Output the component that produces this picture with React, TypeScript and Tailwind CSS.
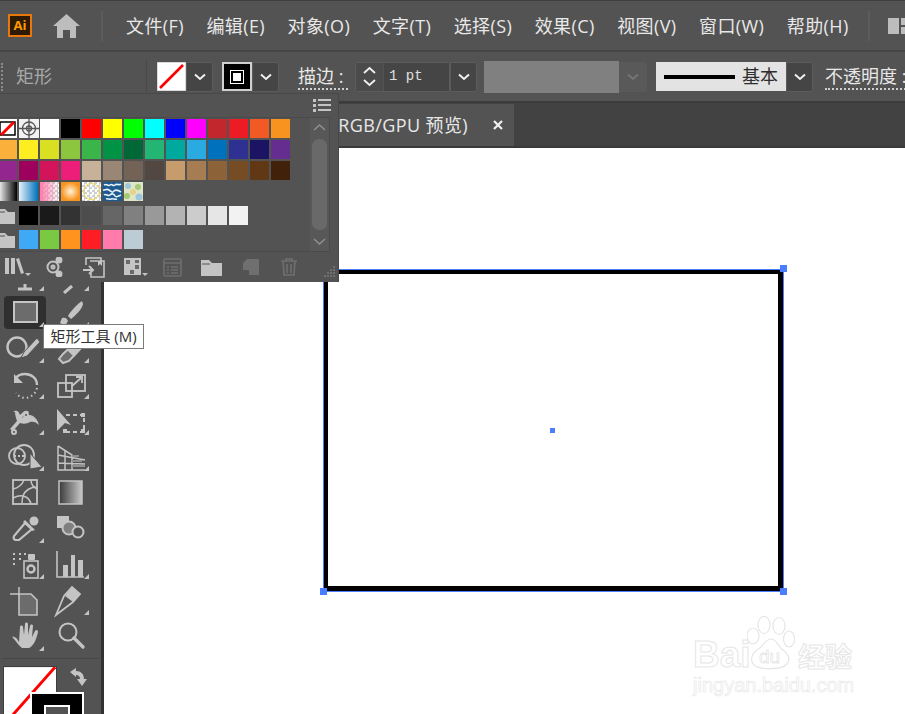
import { ReactNode } from "react";

const FONT = "font-['Open_Sans','Noto_Sans_CJK_SC',sans-serif]";
const LINE = "#c4c4c4";

const MENUS = ["文件(F)", "编辑(E)", "对象(O)", "文字(T)", "选择(S)", "效果(C)", "视图(V)", "窗口(W)", "帮助(H)"];

const ROW1 = ["#ff0000", "#ffff00", "#00ff00", "#00ffff", "#0000ff", "#ff00ff", "#c1272d", "#ed1c24", "#f15a24", "#f7931e"];
const ROW2 = ["#fbb03b", "#fcee21", "#d9e021", "#8cc63f", "#39b54a", "#009245", "#006837", "#22b573", "#00a99d", "#29abe2", "#0071bc", "#2e3192", "#1b1464", "#662d91"];
const ROW3 = ["#93278f", "#9e005d", "#d4145a", "#ed1e79", "#c7b299", "#998675", "#736357", "#534741", "#c69c6d", "#a67c52", "#8c6239", "#754c24", "#603813", "#42210b"];
const GRAYS = ["#000000", "#1a1a1a", "#333333", "#4d4d4d", "#666666", "#808080", "#999999", "#b3b3b3", "#cccccc", "#e6e6e6", "#f2f2f2"];
const BRIGHTS = ["#3fa9f5", "#7ac943", "#ff931e", "#ff1d25", "#ff7bac", "#bdccd4"];

const Chevron = ({ dim }: { dim?: boolean }) => (
  <svg width="14" height="8" viewBox="0 0 14 8" fill="none" stroke={dim ? "#757575" : "#f0f0f0"} strokeWidth="2">
    <path d="M2 1.5 7 6l5-4.5" />
  </svg>
);

const DropButton = ({ w = "w-[27px]", dim }: { w?: string; dim?: boolean }) => (
  <div className={`${w} h-[30px] rounded-r-[3px] flex items-center justify-center ${dim ? "bg-[#595959]" : "bg-[#454545] border border-[#5c5c5c]"}`}>
    <Chevron dim={dim} />
  </div>
);

const Swatch = ({ color }: { color: string }) => (
  <div className="w-[19px] h-[19px]" style={{ backgroundColor: color }} />
);

const Folder = () => (
  <svg width="19" height="19" viewBox="0 0 19 19" fill="#c4c4c4">
    <path d="M-2 3h9l3 3h7v12H-2z" />
    <path d="M-2 6h9" stroke="#535353" fill="none" />
  </svg>
);

const NoneSwatch = () => (
  <svg width="19" height="19" viewBox="0 0 19 19">
    <rect width="19" height="19" fill="#fff" />
    <rect x="2" y="3" width="15" height="13" fill="#fff" stroke="#000" strokeWidth="1.5" />
    <path d="M3 16 16 3" stroke="#f00" strokeWidth="3" />
  </svg>
);

const RegSwatch = () => (
  <svg width="20" height="19" viewBox="0 0 20 19" fill="none" stroke="#555">
    <rect width="20" height="19" fill="#f2f2f2" stroke="none" />
    <circle cx="10" cy="9.5" r="6.5" strokeWidth="1.3" />
    <circle cx="10" cy="9.5" r="2.5" strokeWidth="1.3" />
    <path d="M10 0v19M0 9.5h20" strokeWidth="1.3" />
  </svg>
);

const CircleChecker = () => (
  <div className="w-[19px] h-[19px] bg-white bg-[repeating-conic-gradient(#cfcfcf_0%_25%,#ffffff_0%_50%)] bg-[length:5px_5px] flex items-center justify-center">
    <div className="w-[17px] h-[17px] rounded-full border border-[#f0d64a]" />
  </div>
);

const BluePattern = () => (
  <svg width="19" height="19" viewBox="0 0 19 19" fill="none" stroke="#e8f0f6" strokeWidth="1.6">
    <rect width="19" height="19" fill="#1c5a92" stroke="none" />
    <path d="M1 3c3-2 4 2 6 0s3 2 5 0 4 1 6-1M0 8c2 1 3-2 6 0s3 3 5 1 4-1 7 1M1 13c2-2 4 2 6 0s4-1 5 1 3 0 6-1M3 17c2-1 3 1 5 0s4 1 6 0" />
  </svg>
);

const GreenPattern = () => (
  <svg width="19" height="19" viewBox="0 0 19 19">
    <rect width="19" height="19" fill="#dfe6c8" />
    <circle cx="4" cy="4" r="3" fill="#9cc7dc" />
    <circle cx="14" cy="5" r="3" fill="#a4c974" />
    <circle cx="9" cy="10" r="3" fill="#e8d28a" />
    <circle cx="3" cy="14" r="3" fill="#a4c974" />
    <circle cx="15" cy="15" r="3.5" fill="#9cc7dc" />
  </svg>
);

// one 45x36 toolbar cell, drawn in local coordinates
const Tool = ({ children, corner = true, active }: { children?: ReactNode; corner?: boolean; active?: boolean }) => (
  <div className="relative w-[45px] h-[36px]">
    {active && <div className="absolute left-[1px] top-[2px] w-[42px] h-[33px] rounded-[4px] bg-[#2f2f2f]" />}
    <svg className="absolute inset-0" width="45" height="36" viewBox="0 0 45 36" fill="none" stroke={LINE} strokeWidth="2">
      {children}
    </svg>
    {corner && (
      <svg className="absolute right-[4px] bottom-[3px]" width="5" height="5" viewBox="0 0 5 5" fill={LINE}>
        <path d="M5 0v5H0z" />
      </svg>
    )}
  </div>
);

const Panel = () => (
  <div className="absolute left-0 top-[93px] w-[339px] h-[189px] bg-[#535353] border-t border-r border-[#484848] flex flex-col">
    <div className="h-[23px] shrink-0 flex items-center justify-end pr-[7px]">
      <svg width="18" height="15" viewBox="0 0 18 15" fill={LINE}>
        <path d="M0 1h3v3H0zM5 1h13v2H5zM0 6h3v3H0zM5 6h13v2H5zM0 11h3v3H0zM5 11h13v2H5z" />
      </svg>
    </div>
    <div className="h-[135px] w-[330px] shrink-0 border border-l-0 border-[#4a4a4a] flex">
      <div className="flex-1 -ml-[2px] pt-[1px] flex flex-col gap-[2px]">
        <div className="flex gap-[2px]">
          <NoneSwatch />
          <RegSwatch />
          <div className="w-[19px] h-[19px] bg-white -ml-[1px]" />
          <div className="w-[19px] h-[19px] bg-black" />
          {ROW1.map((c) => <Swatch key={c} color={c} />)}
        </div>
        <div className="flex gap-[2px]">{ROW2.map((c) => <Swatch key={c} color={c} />)}</div>
        <div className="flex gap-[2px]">{ROW3.map((c) => <Swatch key={c} color={c} />)}</div>
        <div className="flex gap-[2px]">
          <div className="w-[19px] h-[19px] bg-[linear-gradient(90deg,#fff,#000)]" />
          <div className="w-[19px] h-[19px] bg-[linear-gradient(90deg,#e6f1fa,#0071bc)]" />
          <div className="w-[19px] h-[19px] bg-[linear-gradient(90deg,#ff7bac,#ffffff00),repeating-conic-gradient(#cfcfcf_0%_25%,#ffffff_0%_50%)] bg-[length:100%_100%,5px_5px]" />
          <div className="w-[19px] h-[19px] bg-[radial-gradient(circle,#fff3d8,#f7931e_70%)]" />
          <CircleChecker />
          <BluePattern />
          <GreenPattern />
        </div>
        <div className="flex gap-[2px] mt-[3px]">
          <Folder />
          {GRAYS.map((c) => <Swatch key={c} color={c} />)}
        </div>
        <div className="flex gap-[2px] mt-[3px]">
          <Folder />
          {BRIGHTS.map((c) => <Swatch key={c} color={c} />)}
        </div>
      </div>
      <div className="w-[19px] shrink-0 flex flex-col items-center justify-between py-[5px] bg-[#585858]">
        <svg width="13" height="8" viewBox="0 0 13 8" fill="none" stroke="#8f8f8f" strokeWidth="1.6"><path d="M1 7l5.5-5L12 7" /></svg>
        <div className="w-[15px] h-[91px] rounded-[7px] bg-[#696969]" />
        <svg width="13" height="8" viewBox="0 0 13 8" fill="none" stroke="#8f8f8f" strokeWidth="1.6"><path d="M1 1l5.5 5L12 1" /></svg>
      </div>
    </div>
    <div className="relative flex-1 flex items-center pl-[5px]">
      <svg width="27" height="20" viewBox="0 0 27 20" fill={LINE}>
        <path d="M0 1h4v16H0zM6 1h4v16H6zM11 2l3-1 5 15-3 1z" />
        <path d="M20 16h6l-3 3z" />
      </svg>
      <svg className="ml-[14px]" width="18" height="20" viewBox="0 0 18 20" fill="none" stroke={LINE} strokeWidth="2">
        <circle cx="7" cy="10" r="5.5" />
        <circle cx="7" cy="10" r="1.5" />
        <circle cx="13" cy="3" r="2.5" fill={LINE} />
        <circle cx="13" cy="17" r="2.5" fill={LINE} />
      </svg>
      <svg className="ml-[19px]" width="22" height="21" viewBox="0 0 22 21" fill="none" stroke={LINE} strokeWidth="1.6">
        <path d="M3 8V1h15v3M7 4h14v16H8v-4" />
        <path d="M0 13h9M6 9l4 4-4 4" strokeWidth="2" />
        <path d="M15 4h4v5l-2-2-2 2z" fill={LINE} stroke="none" />
      </svg>
      <svg className="ml-[18px]" width="25" height="21" viewBox="0 0 25 21" fill={LINE}>
        <path d="M1 1h17v17H1z" />
        <path d="M3 3h4v4H3zM12 8h4v4h-4zM7 13h4v4H7zM12 3h4v3h-4z" fill="#6a6a6a" />
        <path d="M19 16h6l-3 3z" />
      </svg>
      <svg className="ml-[15px]" width="19" height="19" viewBox="0 0 19 19" fill="none" stroke="#6f6f6f" strokeWidth="1.6">
        <rect x="1" y="1" width="17" height="17" rx="1" />
        <path d="M1 5h17M4 9h2M8 9h7M4 12h2M8 12h7M4 15h2M8 15h7" />
      </svg>
      <svg className="ml-[19px]" width="21" height="17" viewBox="0 0 21 17" fill={LINE}>
        <path d="M0 1h8l3 3h10v13H0z" />
        <path d="M1 5h8" stroke="#535353" />
      </svg>
      <svg className="ml-[21px]" width="16" height="16" viewBox="0 0 16 16" fill="#6f6f6f">
        <path d="M4 0h12v16H6v-5H0V4z" />
      </svg>
      <svg className="ml-[22px]" width="16" height="18" viewBox="0 0 16 18" fill="none" stroke="#6f6f6f" strokeWidth="1.6">
        <path d="M0 3h16M5 3V1h6v2M2 3l1 14h10l1-14M6 6v9M10 6v9" />
      </svg>
      <svg className="absolute right-[2px] bottom-[2px]" width="14" height="14" viewBox="0 0 14 14" fill="#6f6f6f">
        <path d="M11 0h2v2h-2zM8 3h2v2H8zM11 3h2v2h-2zM5 6h2v2H5zM8 6h2v2H8zM11 6h2v2h-2zM2 9h2v2H2zM5 9h2v2H5zM8 9h2v2H8zM11 9h2v2h-2z" />
      </svg>
    </div>
  </div>
);

const Toolbar = () => (
  <div className="w-[104px] shrink-0 h-full bg-[#535353] border-r-[3px] border-[#323232] overflow-hidden pt-[110px]">
    <div className="pl-[3px] grid grid-cols-[45px_45px]">
      <Tool><path d="M22 26v4M15 31h14" strokeWidth="3" /></Tool>
      <Tool><path d="M24 28l-8 7" strokeWidth="3" /></Tool>

      <Tool active>
        <rect x="11" y="8" width="23" height="20" fill="#6c6c6c" />
      </Tool>
      <Tool>
        <path d="M34 7c-3 2-11 9-14 15l3 3c5-4 11-10 12-15z" fill={LINE} stroke="none" />
        <path d="M14 24c3-1 5 0 6 3l-3 5-5-3z" fill={LINE} stroke="none" />
      </Tool>

      <Tool>
        <circle cx="14" cy="17" r="9.5" strokeWidth="2.4" />
        <path d="M34 8 21 22l-3 6 6-2L37 12z" fill={LINE} stroke="#535353" strokeWidth="1" />
      </Tool>
      <Tool>
        <path d="M30 10 15 24l-4 5 4 4 6-2 14-15z" fill="#6c6c6c" />
        <path d="M31 8 19 20l7 7 10-11z" fill={LINE} stroke="none" />
      </Tool>

      <Tool>
        <path d="M13 12c2-3 6-4 9-4 6 0 12 4 12 11" strokeWidth="2.4" />
        <path d="M11 8v9h9z" fill={LINE} stroke="none" />
        <path d="M34 22c-1 5-5 9-11 10-4 0-8-2-10-5" strokeDasharray="1.5 3" />
      </Tool>
      <Tool>
        <rect x="10" y="17" width="14" height="14" strokeWidth="1.8" />
        <rect x="18" y="9" width="19" height="16" strokeWidth="1.8" />
        <path d="M24 20l9-8M28 11h6v6" strokeWidth="1.8" />
      </Tool>

      <Tool>
        <path d="M10 10c4-3 6 0 7 3 3-3 6-6 9-3l-2 3c-2-1-4 0-5 3 3-3 8-4 11-2 3 2 5 5 6 9-3-3-6-4-9-3-3 2-7 2-10 1l-7 8-3-2 7-8c-1-3-2-6-2-9z" fill={LINE} stroke="none" />
        <circle cx="11" cy="30" r="2" />
        <circle cx="23" cy="13" r="2" fill="#535353" />
      </Tool>
      <Tool>
        <path d="M9 7v22l8-8 6 2z" fill={LINE} stroke="none" />
        <path d="M18 13h18v17H17" strokeDasharray="4 3" />
        <rect x="15" y="27" width="4" height="4" fill={LINE} stroke="none" />
        <rect x="33" y="11" width="4" height="4" fill={LINE} stroke="none" />
        <rect x="33" y="27" width="4" height="4" fill={LINE} stroke="none" />
      </Tool>

      <Tool>
        <circle cx="14" cy="18" r="8" strokeWidth="1.8" />
        <circle cx="21" cy="17" r="10" strokeWidth="1.8" />
        <path d="M11 18h12" strokeDasharray="2 2" />
        <path d="M27 15v16l12-2z" fill={LINE} stroke="#535353" strokeWidth="1" />
      </Tool>
      <Tool>
        <path d="M10 8v24h27M10 8l14 9v15M10 17l27 5M10 25l27 1M17 12v20" strokeWidth="1.5" />
        <path d="M24 18h7M24 23h10M24 28h13" stroke="#8f8f8f" />
      </Tool>

      <Tool corner={false}>
        <rect x="10" y="6" width="24" height="24" strokeWidth="1.8" />
        <path d="M10 15c5-1 9-4 11-9M34 13c-6 0-12 3-14 9-1 3-1 6-1 8M10 24c4-2 7-3 10-2 5 1 7 4 8 8M28 6c0 3 2 7 6 9" strokeWidth="1.5" />
      </Tool>
      <Tool corner={false}>
        <defs>
          <linearGradient id="grad-tool" x1="0" x2="1" y1="0" y2="0">
            <stop offset="0" stopColor="#3a3a3a" />
            <stop offset="1" stopColor="#c8c8c8" />
          </linearGradient>
        </defs>
        <rect x="11" y="7" width="23" height="23" fill="url(#grad-tool)" strokeWidth="1.5" />
      </Tool>

      <Tool>
        <path d="M13 30c-2 0-3-2-2-4l11-13 7 6-13 11z" strokeWidth="2.2" />
        <path d="M22 10l10 10-3 1-9-9z" fill={LINE} stroke="none" />
        <circle cx="31" cy="11" r="4.5" fill={LINE} stroke="none" />
      </Tool>
      <Tool corner={false}>
        <rect x="9" y="6" width="12" height="12" fill={LINE} stroke="none" />
        <circle cx="21" cy="18" r="6.5" fill="#808080" />
        <circle cx="30" cy="22" r="5.5" fill="#535353" />
      </Tool>

      <Tool>
        <path d="M10 7h2v2h-2zM16 7h2v2h-2zM21 7h2v2h-2zM10 12h2v2h-2zM16 12h2v2h-2zM10 17h2v2h-2z" fill={LINE} stroke="none" />
        <rect x="21" y="15" width="14" height="17" strokeWidth="1.6" />
        <rect x="25" y="8" width="7" height="6" rx="1" fill={LINE} stroke="none" />
        <circle cx="28" cy="23" r="3.5" strokeWidth="2.4" />
      </Tool>
      <Tool>
        <path d="M9 5v26h27" strokeWidth="1.6" />
        <path d="M15 19h5v12h-5zM23 9h4v22h-4zM30 14h5v17h-5z" fill={LINE} stroke="none" />
      </Tool>

      <Tool corner={false}>
        <path d="M16 5v9M7 12h9" strokeWidth="1.5" />
        <path d="M16 12h12l6 6v15H16z" fill="#6c6c6c" strokeWidth="1.6" />
      </Tool>
      <Tool>
        <path d="M8 33 16 14l8-9 8 7-7 8z" strokeWidth="1.8" />
        <path d="M24 5l8 7-7 8-8-6z" fill={LINE} stroke="none" />
      </Tool>

      <Tool>
        <path d="M11 19c2 0 4 3 5 5l1-15c0-2 3-2 3 0l1 8 1-11c0-2 3-2 3 0l0 11 2-9c0-2 3-2 3 0l-1 11 3-6c1-2 3-1 3 1-1 5-4 14-9 16h-7c-3-2-6-7-9-10-1-1 0-2 1-1z" fill={LINE} stroke="none" />
      </Tool>
      <Tool corner={false}>
        <circle cx="20" cy="14" r="8.5" strokeWidth="2" />
        <path d="M26 20l9 9" strokeWidth="3.4" strokeLinecap="round" />
      </Tool>
    </div>
    <div className="mx-[2px] mt-[4px] h-[1px] bg-[#474747]" />
    <div className="relative h-[60px]">
      <svg className="absolute left-[3px] top-[7px] border border-[#3e3e3e]" width="54" height="60" viewBox="0 0 54 60">
        <rect width="54" height="60" fill="#fff" />
        <path d="M53 0 0 60" stroke="#f00" strokeWidth="3" />
      </svg>
      <svg className="absolute left-[70px] top-[9px]" width="18" height="19" viewBox="0 0 18 19" fill={LINE}>
        <path d="M0 4l6-4v3c5 0 8 3 8 8h3l-5 7-5-7h3c0-3-2-4-4-4v2z" />
      </svg>
      <div className="absolute left-[30px] top-[33px] w-[54px] h-[40px] bg-black border-2 border-white flex justify-center pt-[11px]">
        <div className="w-[26px] h-[26px] bg-[#535353] border-2 border-white" />
      </div>
    </div>
  </div>
);

const Watermark = () => (
  <div className="absolute left-[589px] top-[490px] w-[170px] h-[70px] text-white font-['Liberation_Sans',sans-serif] [-webkit-text-stroke:1px_#e6e6e6]">
    <div className="flex items-start">
      <span className="text-[37px] leading-[30px] mt-[2px] font-bold w-[57px] shrink-0">Bai</span>
      <svg className="-mt-[22px] -ml-[3px] shrink-0" width="50" height="58" viewBox="0 0 50 58" fill="none" stroke="#e6e6e6" strokeWidth="1.2">
        <ellipse cx="6" cy="20" rx="6" ry="8" />
        <ellipse cx="17" cy="9" rx="6" ry="8.5" />
        <ellipse cx="32" cy="10" rx="6" ry="8.5" />
        <ellipse cx="42" cy="23" rx="5.5" ry="8" />
        <path d="M24 23c-6 0-8 8-14 11-6 4-7 11-3 15 6 5 28 5 33-1 4-5 1-10-4-14-5-3-6-11-12-11z" />
        <text x="12" y="47" fontSize="19" stroke="#e6e6e6" strokeWidth="0.8" fill="#fff" fontFamily="Liberation Sans">du</text>
      </svg>
      <span className="text-[27px] leading-[30px] mt-[3px] ml-[1px] shrink-0 font-['Noto_Sans_CJK_SC',sans-serif] font-bold">经验</span>
    </div>
    <div className="text-[20px] leading-[20px] mt-[1px] whitespace-nowrap [-webkit-text-stroke:0.6px_#e6e6e6]">jingyan.baidu.com</div>
  </div>
);

export default function App() {
  return (
    <div className={`relative w-[905px] h-[714px] overflow-hidden flex flex-col bg-white text-[#e8e8e8] ${FONT}`}>
      <div className="h-[52px] shrink-0 bg-[#535353] border-t border-[#3f3f3f] border-b-2 border-b-[#454545] flex items-center pl-[8px] [&>*]:shrink-0">
        <div className="w-[24px] h-[23px] border-2 border-[#e8780c] bg-[#2f1a05] flex items-center justify-center text-[13px] leading-none font-bold text-[#ff9a00]">Ai</div>
        <svg className="ml-[21px]" width="27" height="24" viewBox="0 0 27 24" fill="#bdbdbd">
          <path d="M13.5 0 27 12h-4v12h-6v-8h-7v8H4V12H0z" />
        </svg>
        <div className="ml-[21px] w-[2px] h-[30px] bg-[#5c5c5c]" />
        <div className="ml-[23px] flex gap-[22.5px] text-[18px] leading-[24px] tracking-[0.4px] whitespace-nowrap">
          {MENUS.map((m) => <span key={m}>{m}</span>)}
        </div>
        <div className="ml-[19px] w-[2px] h-[30px] bg-[#5c5c5c]" />
        <div className="ml-[18px] grid grid-cols-[11px_6px] grid-rows-[7px_7px] gap-[2px]">
          <div className="row-span-2 bg-[#bdbdbd]" />
          <div className="bg-[#bdbdbd]" />
          <div className="bg-[#bdbdbd]" />
        </div>
      </div>

      <div className="h-[51px] shrink-0 bg-[#535353] border-b-2 border-[#3c3c3c] flex items-center text-[18px] whitespace-nowrap [&>*]:shrink-0">
        <div className="ml-[1px] w-[3px] h-[28px] border-l-2 border-dotted border-[#8a8a8a]" />
        <span className="ml-[12px] w-[36px] text-[#a8a8a8]">矩形</span>
        <div className="ml-[94px] w-[1px] h-[34px] bg-[#494949]" />
        <svg className="ml-[10px]" width="29" height="29" viewBox="0 0 29 29">
          <rect width="29" height="29" fill="#fff" stroke="#b5b5b5" />
          <path d="M3 26 26 3" stroke="#f00" strokeWidth="2.6" />
        </svg>
        <DropButton />
        <div className="ml-[9px] w-[30px] h-[29px] bg-black border-2 border-[#d0d0d0] flex items-center justify-center">
          <div className="w-[14px] h-[14px] border border-white flex items-center justify-center">
            <div className="w-[8px] h-[8px] bg-white" />
          </div>
        </div>
        <DropButton />
        <span className="ml-[19px] w-[50px] leading-[24px] border-b-2 border-dotted border-[#cfcfcf]">描边 :</span>
        <div className="ml-[7px] flex h-[30px] rounded-[3px] border border-[#5c5c5c]">
          <div className="w-[27px] bg-[#4b4b4b] flex flex-col items-center justify-center gap-[5px]">
            <svg width="13" height="8" viewBox="0 0 13 8" fill="none" stroke="#f0f0f0" strokeWidth="1.8"><path d="M1 7l5.5-5L12 7" /></svg>
            <svg width="13" height="8" viewBox="0 0 13 8" fill="none" stroke="#f0f0f0" strokeWidth="1.8"><path d="M1 1l5.5 5L12 1" /></svg>
          </div>
          <div className="ml-[1px] w-[65px] bg-[#454545] pl-[5px] font-['Liberation_Mono',monospace] text-[14px] leading-[26px] text-[#e0e0e0]">1 pt</div>
        </div>
        <DropButton />
        <div className="ml-[7px] w-[135px] h-[32px] bg-[#808080]" />
        <DropButton w="w-[28px]" dim />
        <div className="ml-[9px] w-[130px] h-[29px] bg-[#e3e3e3] flex items-center pl-[8px]">
          <div className="w-[71px] h-[4px] bg-black" />
          <span className="ml-[7px] text-[#2e2e2e]">基本</span>
        </div>
        <DropButton />
        <span className="ml-[12px] leading-[24px] border-b-2 border-dotted border-[#cfcfcf]">不透明度 :</span>
      </div>

      <div className="h-[45px] shrink-0 bg-[#424242] border-b-2 border-[#3a3a3a] flex">
        <div className="ml-[104px] w-[410px] h-[42px] mt-[1px] bg-[#535353] flex items-center justify-end pr-[11px] text-[18px] tracking-[0.4px] whitespace-nowrap overflow-hidden [&>*]:shrink-0">
          <span>未标题-1 @ 100% (RGB/GPU 预览)</span>
          <svg className="ml-[25px]" width="10" height="10" viewBox="0 0 10 10" stroke="#f0f0f0" strokeWidth="2.2"><path d="M1 1l8 8M9 1 1 9" /></svg>
        </div>
      </div>

      <div className="flex-1 min-h-0 flex">
        <Toolbar />
        <div className="relative flex-1 bg-white">
          <div className="absolute left-[219px] top-[121px] w-[461px] h-[323px] border border-[#4a7dff]">
            <div className="w-full h-full border-[4px] border-r-[5px] border-b-[5px] border-black" />
          </div>
          <div className="absolute left-[216px] top-[117px] w-[7px] h-[7px] bg-[#4a7dff]" />
          <div className="absolute left-[676px] top-[117px] w-[7px] h-[7px] bg-[#4a7dff]" />
          <div className="absolute left-[216px] top-[440px] w-[7px] h-[7px] bg-[#4a7dff]" />
          <div className="absolute left-[676px] top-[440px] w-[7px] h-[7px] bg-[#4a7dff]" />
          <div className="absolute left-[446px] top-[280px] w-[5px] h-[5px] bg-[#4a7dff]" />
          <Watermark />
        </div>
      </div>

      <Panel />
      <div className="absolute left-[43px] top-[324px] w-[101px] h-[25px] bg-white border border-[#7a7a7a] text-[15px] leading-[23px] text-center text-[#333] whitespace-nowrap">矩形工具 (M)</div>
    </div>
  );
}
